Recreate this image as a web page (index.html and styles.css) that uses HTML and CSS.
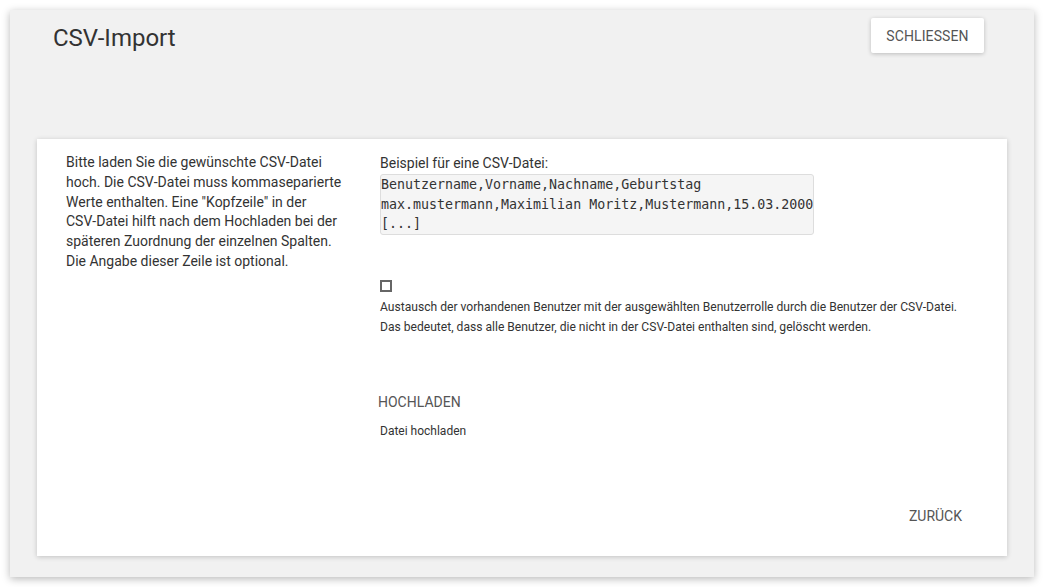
FILE: index.html
```html
<!DOCTYPE html>
<html lang="de">
<head>
<meta charset="utf-8">
<title>CSV-Import</title>
<link rel="stylesheet" href="styles.css">
</head>
<body>
<div class="page">
  <div class="dialog">
    <div class="dialog-header">
      <h1 class="title">CSV-Import</h1>
      <button class="btn-raised" type="button">Schliessen</button>
    </div>
    <div class="card">
      <div class="card-body">
        <div class="col-left">
          <p class="intro">Bitte laden Sie die gewünschte CSV&#8209;Datei hoch. Die CSV&#8209;Datei muss kommaseparierte Werte enthalten. Eine "Kopfzeile" in der CSV&#8209;Datei hilft nach dem Hochladen bei der späteren Zuordnung der einzelnen Spalten. Die Angabe dieser Zeile ist optional.</p>
        </div>
        <div class="col-right">
          <div class="example-label">Beispiel für eine CSV-Datei:</div>
          <pre class="code">Benutzername,Vorname,Nachname,Geburtstag
max.mustermann,Maximilian Moritz,Mustermann,15.03.2000
[...]</pre>
          <label class="replace">
            <span class="checkbox"></span>
            <span class="replace-text">Austausch der vorhandenen Benutzer mit der ausgewählten Benutzerrolle durch die Benutzer der CSV-Datei.<br>Das bedeutet, dass alle Benutzer, die nicht in der CSV-Datei enthalten sind, gelöscht werden.</span>
          </label>
          <button class="btn-flat upload" type="button">Hochladen</button>
          <div class="upload-hint">Datei hochladen</div>
        </div>
      </div>
      <div class="card-actions">
        <button class="btn-flat" type="button">Zurück</button>
      </div>
    </div>
  </div>
</div>
</body>
</html>
```

FILE: styles.css
```css
* { box-sizing: border-box; }
html, body { margin: 0; padding: 0; background: #ffffff; }
body {
  font-family: Roboto, "Noto Sans", "Liberation Sans", sans-serif;
  color: #333333;
}
.page {
  padding: 10px;
  width: 1044px;
  height: 587px;
}
.dialog {
  width: 1024px;
  height: 567px;
  background: #f1f1f1;
  box-shadow: 0 2px 8px rgba(0,0,0,0.28);
  display: flex;
  flex-direction: column;
}
.dialog-header {
  display: flex;
  justify-content: space-between;
  align-items: flex-start;
  height: 129px;
  padding: 8px 50px 0 43px;
}
.title {
  margin: 4px 0 0 0;
  font-size: 24px;
  font-weight: 400;
  line-height: 32px;
  color: #333;
}
.btn-raised {
  width: 113px;
  height: 35px;
  border: none;
  border-radius: 2px;
  background: #ffffff;
  box-shadow: 0 1px 4px rgba(0,0,0,0.22);
  font-family: Roboto, "Liberation Sans", sans-serif;
  font-size: 14px;
  text-transform: uppercase;
  color: #555;
  padding: 0;
  letter-spacing: 0.1px;
}
.card {
  margin: 0 27px 21px 27px;
  flex: 1;
  background: #ffffff;
  box-shadow: 0 1px 5px rgba(0,0,0,0.2);
  display: flex;
  flex-direction: column;
}
.card-body {
  display: flex;
  padding: 14px 0 0 29px;
  flex: 1;
}
.col-left {
  width: 314px;
  flex: none;
}
.intro {
  margin: 0;
  width: 280px;
  font-size: 14px;
  line-height: 19.8px;
  color: #333;
}
.col-right {
  flex: 1;
  display: flex;
  flex-direction: column;
  align-items: flex-start;
}
.example-label {
  font-size: 14px;
  line-height: 20px;
  color: #333;
}
.code {
  margin: 1px 0 0 0;
  width: 434px;
  background: #f5f5f5;
  border: 1px solid #dddddd;
  border-radius: 3px;
  padding: 0;
  font-family: "DejaVu Sans Mono", "Liberation Mono", monospace;
  font-size: 13.3px;
  line-height: 19.5px;
  color: #333;
  white-space: pre;
  overflow: hidden;
}
.replace {
  display: flex;
  flex-direction: column;
  align-items: flex-start;
  margin: 45px 0 0 0;
}
.checkbox {
  display: block;
  width: 12px;
  height: 12px;
  border: 2px solid #666;
}
.replace-text {
  margin-top: 5px;
  font-size: 12.1px;
  line-height: 20px;
  color: #333;
}
.btn-flat {
  border: none;
  background: transparent;
  font-family: Roboto, "Liberation Sans", sans-serif;
  font-size: 14px;
  text-transform: uppercase;
  color: #555;
  padding: 0;
  line-height: 20px;
}
.upload {
  margin-top: 55px;
  margin-left: -2px;
}
.upload-hint {
  margin: 9px 0 0 0;
  font-size: 12px;
  line-height: 20px;
  color: #333;
}
.card-actions {
  display: flex;
  justify-content: flex-end;
  padding: 0 45px 30px 0;
}
```
